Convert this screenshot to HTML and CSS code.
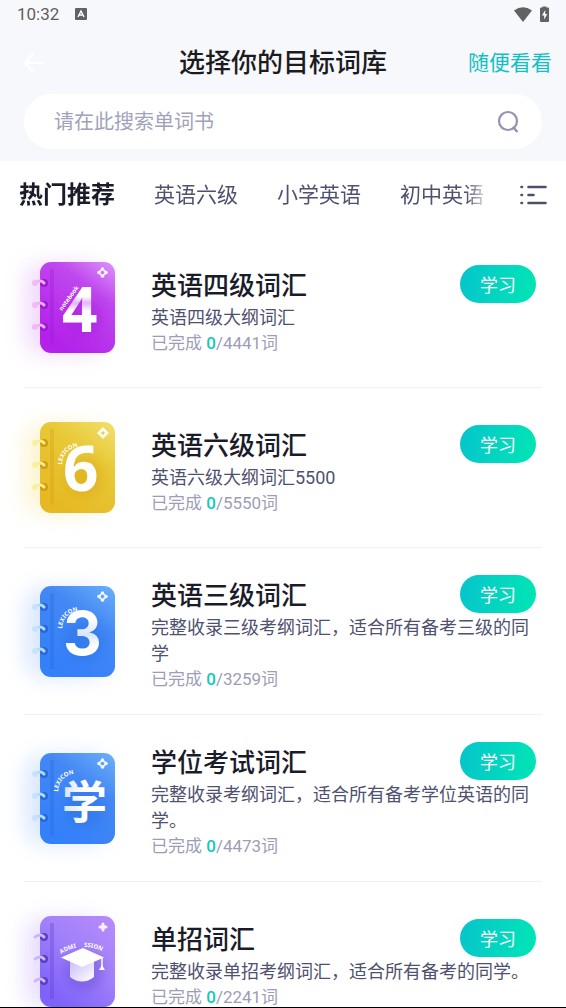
FILE: index.html
```html
<!DOCTYPE html>
<html lang="zh-CN">
	<head>
		<meta charset="utf-8">
		<meta name="viewport" content="width=device-width, initial-scale=1">
		<title>选择你的目标词库</title>
		<link rel="stylesheet" href="styles.css">
	</head>
	<body>
		<!-- Shared book parts and gradients -->
		<svg class="defs" aria-hidden="true">
			<defs>
				<linearGradient id="purple" x1="1" y1="0" x2="0.4" y2="1">
					<stop offset="0" stop-color="#df94fa" />
					<stop offset="0.35" stop-color="#bf48ee" />
					<stop offset="1" stop-color="#b321ea" />
				</linearGradient>
				<linearGradient id="yellow" x1="1" y1="0" x2="0.4" y2="1">
					<stop offset="0" stop-color="#f2e070" />
					<stop offset="0.4" stop-color="#e8c938" />
					<stop offset="1" stop-color="#e6b924" />
				</linearGradient>
				<linearGradient id="blue" x1="1" y1="0" x2="0.4" y2="1">
					<stop offset="0" stop-color="#6cb0fa" />
					<stop offset="0.4" stop-color="#4488f4" />
					<stop offset="1" stop-color="#3480fa" />
				</linearGradient>
				<linearGradient id="violet" x1="1" y1="0" x2="0.3" y2="1">
					<stop offset="0" stop-color="#b88cfa" />
					<stop offset="0.5" stop-color="#a080fa" />
					<stop offset="1" stop-color="#7e62fa" />
				</linearGradient>
				<linearGradient id="four" x1="0" y1="0" x2="0" y2="1">
					<stop offset="0.36" stop-color="#fff" />
					<stop offset="0.44" stop-color="#e4b4f8" />
					<stop offset="0.54" stop-color="#fff" />
				</linearGradient>
				<linearGradient id="three" x1="0" y1="0" x2="0" y2="1">
					<stop offset="0.3" stop-color="#fff" />
					<stop offset="0.52" stop-color="#d8e6fe" />
					<stop offset="0.68" stop-color="#fff" />
				</linearGradient>
				<linearGradient id="xue" x1="0" y1="0" x2="1" y2="0">
					<stop offset="0" stop-color="#d2e3fe" />
					<stop offset="0.5" stop-color="#fff" />
				</linearGradient>
				<linearGradient id="cap" x1="0" y1="0" x2="1" y2="1">
					<stop offset="0" stop-color="#cabcfa" />
					<stop offset="1" stop-color="#fff" />
				</linearGradient>
				<filter id="glow" x="-50%" y="-50%" width="200%" height="200%">
					<feGaussianBlur stdDeviation="11" />
				</filter>
				<filter id="soft" x="-50%" y="-50%" width="200%" height="200%">
					<feGaussianBlur stdDeviation="5" />
				</filter>
				<path id="arc" d="M38 56 Q39 38 60 37" />
				<path id="arc-top" d="M37 51 Q59 37 84 51" />
				<symbol id="book" viewBox="-24 -16 160 144" overflow="visible">
					<rect class="glow" x="2" y="16" width="78" height="88" rx="16" filter="url(#glow)" />
					<rect class="cover" x="16" y="13" width="75" height="91" rx="11" />
					<ellipse class="shade" cx="60" cy="68" rx="20" ry="20" filter="url(#soft)" />
					<rect class="spine" x="26" y="20" width="4" height="76" rx="1" />
					<g class="holes">
						<circle cx="20" cy="34" r="4" />
						<circle cx="20" cy="56" r="4" />
						<circle cx="20" cy="78" r="4" />
					</g>
					<g class="rings">
						<path d="M11 34 Q17 30 20 34" />
						<path d="M11 56 Q17 52 20 56" />
						<path d="M11 78 Q17 74 20 78" />
					</g>
					<g class="balls">
						<circle cx="11" cy="34" r="3" />
						<circle cx="11" cy="56" r="3" />
						<circle cx="11" cy="78" r="3" />
					</g>
				</symbol>
				<symbol id="flower" viewBox="0 0 12 12" overflow="visible">
					<path d="M6 2 L10 6 L6 10 L2 6 Z" fill="none" stroke="#fff" stroke-width="2" opacity="0.85" />
					<g fill="#fff" opacity="0.85">
						<circle cx="6" cy="2" r="1.8" />
						<circle cx="10" cy="6" r="1.8" />
						<circle cx="6" cy="10" r="1.8" />
						<circle cx="2" cy="6" r="1.8" />
					</g>
				</symbol>
			</defs>
		</svg>

		<header class="header">
			<div class="status">
				<span class="time">10:32</span>
				<svg width="12" height="12" viewBox="0 0 12 12">
					<rect width="12" height="12" rx="1" fill="#626265" />
					<path d="M3 9 L6 3 L9 9 M4 7 H8" fill="none" stroke="#fff" stroke-width="1.4" />
				</svg>
				<svg class="wifi" width="18" height="15" viewBox="0 0 18 15">
					<path d="M0 3.5 Q9 -3 18 3.5 L9 15 Z" fill="#626265" />
				</svg>
				<svg width="9" height="16" viewBox="0 0 9 16">
					<path d="M2.5 1.5 V0.5 H6.5 V1.5 H8 Q9 1.5 9 2.5 V15 Q9 16 8 16 H1 Q0 16 0 15 V2.5 Q0 1.5 1 1.5 Z" fill="#626265" />
					<path d="M5.2 4 L2 9.5 H4.2 V13.5 L7.2 8 H5.2 Z" fill="#fff" />
				</svg>
			</div>
			<div class="nav">
				<button type="button" class="back" aria-label="返回">
					<svg width="20" height="20" viewBox="0 0 20 20">
						<path d="M9 1 L1 10 L9 19 M1 10 H19" fill="none" stroke="#fff" stroke-width="2" stroke-linecap="round" stroke-linejoin="round" />
					</svg>
				</button>
				<h1>选择你的目标词库</h1>
				<a class="browse" href="#">随便看看</a>
			</div>
			<form class="search">
				<input type="text" aria-label="搜索单词书" placeholder="请在此搜索单词书">
				<button type="button" aria-label="搜索">
					<svg width="24" height="24" viewBox="0 0 24 24">
						<circle cx="12" cy="11" r="9" fill="none" stroke="#9194b0" stroke-width="2.2" />
						<path d="M17 17 L21.5 22" stroke="#9194b0" stroke-width="2.4" />
					</svg>
				</button>
			</form>
		</header>

		<nav class="tabs">
			<div class="tab-list">
				<button type="button" class="tab active">热门推荐</button>
				<button type="button" class="tab">英语六级</button>
				<button type="button" class="tab">小学英语</button>
				<button type="button" class="tab">初中英语</button>
			</div>
			<button type="button" class="menu" aria-label="全部分类">
				<svg width="27" height="20" viewBox="0 0 27 20">
					<path d="M1.5 2 H2 M1.5 10 H2 M1.5 18 H2 M8.5 2 H25.5 M8.5 10 H13.5 M8.5 18 H25.5" fill="none" stroke="#4e4f6c" stroke-width="2.6" stroke-linecap="round" />
				</svg>
			</button>
		</nav>

		<main class="list">
			<article class="item">
				<svg class="book purple" viewBox="0 0 127 116">
					<use href="#book" x="-24" y="-16" width="160" height="144" />
					<use href="#flower" x="73" y="18" width="11" height="11" />
					<text class="digit" x="38" y="83" fill="url(#four)">4</text>
					<text class="label" transform="translate(38 62) rotate(-54)">notebook</text>
				</svg>
				<div class="info">
					<div class="top">
						<h2>英语四级词汇</h2>
						<button type="button" class="learn">学习</button>
					</div>
					<p class="desc">英语四级大纲词汇</p>
					<p class="count">已完成 <b>0</b>/4441词</p>
				</div>
			</article>
			<article class="item">
				<svg class="book yellow" viewBox="0 0 127 116">
					<use href="#book" x="-24" y="-16" width="160" height="144" />
					<path d="M79 18 L85 24 L79 30 L73 24 Z" fill="#fff" opacity="0.9" />
					<path d="M79 22 L81 24 L79 26 L77 24 Z" fill="#e8cf50" />
					<text class="digit" x="39" y="82" fill="#fff">6</text>
					<text class="label"><textPath href="#arc">LEXICON</textPath></text>
				</svg>
				<div class="info">
					<div class="top">
						<h2>英语六级词汇</h2>
						<button type="button" class="learn">学习</button>
					</div>
					<p class="desc">英语六级大纲词汇5500</p>
					<p class="count">已完成 <b>0</b>/5550词</p>
				</div>
			</article>
			<article class="item">
				<svg class="book blue" viewBox="0 0 127 116">
					<use href="#book" x="-24" y="-16" width="160" height="144" />
					<use href="#flower" x="73" y="18" width="11" height="11" />
					<text class="digit round" x="39" y="82" fill="url(#three)">3</text>
					<text class="label"><textPath href="#arc">LEXICON</textPath></text>
				</svg>
				<div class="info">
					<div class="top">
						<h2>英语三级词汇</h2>
						<button type="button" class="learn">学习</button>
					</div>
					<p class="desc">完整收录三级考纲词汇，适合所有备考三级的同学</p>
					<p class="count">已完成 <b>0</b>/3259词</p>
				</div>
			</article>
			<article class="item">
				<svg class="book blue" viewBox="0 0 127 116">
					<use href="#book" x="-24" y="-16" width="160" height="144" />
					<use href="#flower" x="73" y="18" width="11" height="11" />
					<text class="digit han" x="38" y="79" fill="url(#xue)">学</text>
					<text class="label" transform="translate(-4 -4)"><textPath href="#arc">LEXICON</textPath></text>
				</svg>
				<div class="info">
					<div class="top">
						<h2>学位考试词汇</h2>
						<button type="button" class="learn">学习</button>
					</div>
					<p class="desc">完整收录考纲词汇，适合所有备考学位英语的同学。</p>
					<p class="count">已完成 <b>0</b>/4473词</p>
				</div>
			</article>
			<article class="item">
				<svg class="book violet" viewBox="0 0 127 116">
					<use href="#book" x="-24" y="-16" width="160" height="144" />
					<path d="M79 21 V27 M76 24 H82" stroke="#fff" stroke-width="3" stroke-linecap="round" opacity="0.9" />
					<path d="M46 58 V74 Q58 83 70 74 V58 Z" fill="url(#cap)" />
					<path d="M37 54.5 L59 45 L80 54.5 L58 64 Z" fill="#fff" />
					<path d="M78 55 V65" stroke="#fff" stroke-width="1.5" />
					<path d="M78 62 L81 67 H75 Z" fill="#fff" />
					<text class="label"><textPath href="#arc-top">ADMI&#160;&#160;&#160;&#160;&#160;SSION</textPath></text>
				</svg>
				<div class="info">
					<div class="top">
						<h2>单招词汇</h2>
						<button type="button" class="learn">学习</button>
					</div>
					<p class="desc">完整收录单招考纲词汇，适合所有备考的同学。</p>
					<p class="count">已完成 <b>0</b>/2241词</p>
				</div>
			</article>
		</main>
	</body>
</html>
```
FILE: styles.css
```css
* {
	box-sizing: border-box;
}
body {
	margin: 0;
	height: 100vh;
	display: flex;
	flex-direction: column;
	overflow: hidden;
	background: #fff;
	border-bottom: 1px solid #000;
	font-family: Roboto, "Noto Sans CJK SC", sans-serif;
	color: #1b1c2a;
}
h1,
h2,
p {
	margin: 0;
}
button,
input {
	font-family: inherit;
	border: none;
	background: none;
	padding: 0;
}
button {
	cursor: pointer;
}
svg {
	display: block;
	flex: none;
}
.defs {
	position: absolute;
	width: 0;
	height: 0;
}

/* Header */
.header {
	flex: none;
	background: #f7f8fc;
	padding-bottom: 12px;
}
.status {
	display: flex;
	align-items: center;
	height: 30px;
	padding: 0 17px 2px 17px;
	font-size: 17px;
	color: #5f5f62;
}
.time {
	margin-right: 16px;
}
.wifi {
	margin-left: auto;
	margin-right: 8px;
}
.nav {
	display: grid;
	grid-template-columns: 1fr auto 1fr;
	align-items: center;
	height: 64px;
	padding: 2px 14px 0;
}
.nav h1 {
	font-size: 26px;
	font-weight: 500;
	line-height: 38px;
	color: #1c1c1e;
}
.back {
	justify-self: start;
	margin-left: 10px;
}
.browse {
	justify-self: end;
	font-size: 21px;
	line-height: 32px;
	color: #12c0c4;
	text-decoration: none;
}
.search {
	display: flex;
	align-items: center;
	height: 55px;
	margin: 0 24px;
	padding: 0 22px 0 30px;
	border-radius: 28px;
	background: #fff;
}
.search input {
	flex: 1;
	min-width: 0;
	font-size: 20px;
	outline: none;
}
.search input::placeholder {
	color: #a0a2bc;
}

/* Tabs */
.tabs {
	flex: none;
	display: flex;
	align-items: center;
	height: 67px;
}
.tab-list {
	flex: 1;
	min-width: 0;
	display: flex;
	align-items: center;
	gap: 39px;
	padding-left: 19px;
	overflow: hidden;
	-webkit-mask-image: linear-gradient(to left, transparent, #000 24px);
	mask-image: linear-gradient(to left, transparent, #000 24px);
}
.tab {
	flex: none;
	font-size: 21px;
	line-height: 36px;
	color: #4e5170;
}
.tab.active {
	font-size: 24px;
	font-weight: 700;
	color: #1b1c2a;
}
.menu {
	flex: none;
	padding: 0 19px 0 30px;
}

/* Word book list */
.list {
	flex: 1;
	min-height: 0;
	overflow-y: auto;
	scrollbar-width: none;
	padding: 0 24px;
}
.item {
	display: flex;
	align-items: center;
	padding: 21px 0 22px;
	border-bottom: 1px solid #f1f1f4;
}
.info {
	flex: 1;
	min-width: 0;
	padding: 8px 6px 0 0;
}
.top {
	display: flex;
	align-items: center;
	justify-content: space-between;
	height: 38px;
}
.top h2 {
	font-size: 26px;
	font-weight: 500;
	line-height: 38px;
}
.learn {
	width: 76px;
	height: 38px;
	margin-bottom: 4px;
	border-radius: 19px;
	background: linear-gradient(100deg, #06c4cc, #00e6b4);
	color: #fff;
	font-size: 18px;
}
.desc {
	font-size: 18px;
	line-height: 26px;
	color: #4e5170;
}
.count {
	font-size: 17px;
	line-height: 25px;
	color: #9c9eb6;
}
.count b {
	font-weight: 500;
	color: #14c8bc;
}

/* Books */
.book {
	width: 127px;
	height: 116px;
	overflow: visible;
}
.glow {
	fill: var(--glow);
	opacity: 0.3;
}
.cover {
	fill: var(--cover);
}
.shade,
.spine {
	fill: var(--dark);
	opacity: 0.3;
}
.holes {
	fill: var(--dark);
}
.rings {
	fill: none;
	stroke: var(--ring);
	stroke-width: 3;
	stroke-linecap: round;
}
.balls {
	fill: var(--ball);
}
.purple {
	--cover: url(#purple);
	--glow: #d080f4;
	--dark: #9c18d4;
	--ring: #f3b0fa;
	--ball: #f3b8fa;
}
.yellow {
	--cover: url(#yellow);
	--glow: #f2dc60;
	--dark: #d49c0c;
	--ring: #f8f090;
	--ball: #f8f2a0;
}
.blue {
	--cover: url(#blue);
	--glow: #80b0fa;
	--dark: #2468dc;
	--ring: #b4dcfa;
	--ball: #c8e2fc;
}
.violet {
	--cover: url(#violet);
	--glow: #b090fa;
	--dark: #5a3cc8;
	--ring: #c8b8fa;
	--ball: transparent;
}
.digit {
	font-family: "Noto Sans", sans-serif;
	font-size: 62px;
	font-weight: 700;
}
.digit.round {
	font-family: Inter, sans-serif;
	font-size: 60px;
}
.digit.han {
	font-family: "Noto Sans CJK SC", sans-serif;
	font-size: 45px;
}
.label {
	font-family: "Noto Sans", sans-serif;
	font-size: 6px;
	font-weight: 700;
	fill: #fff;
}
```
